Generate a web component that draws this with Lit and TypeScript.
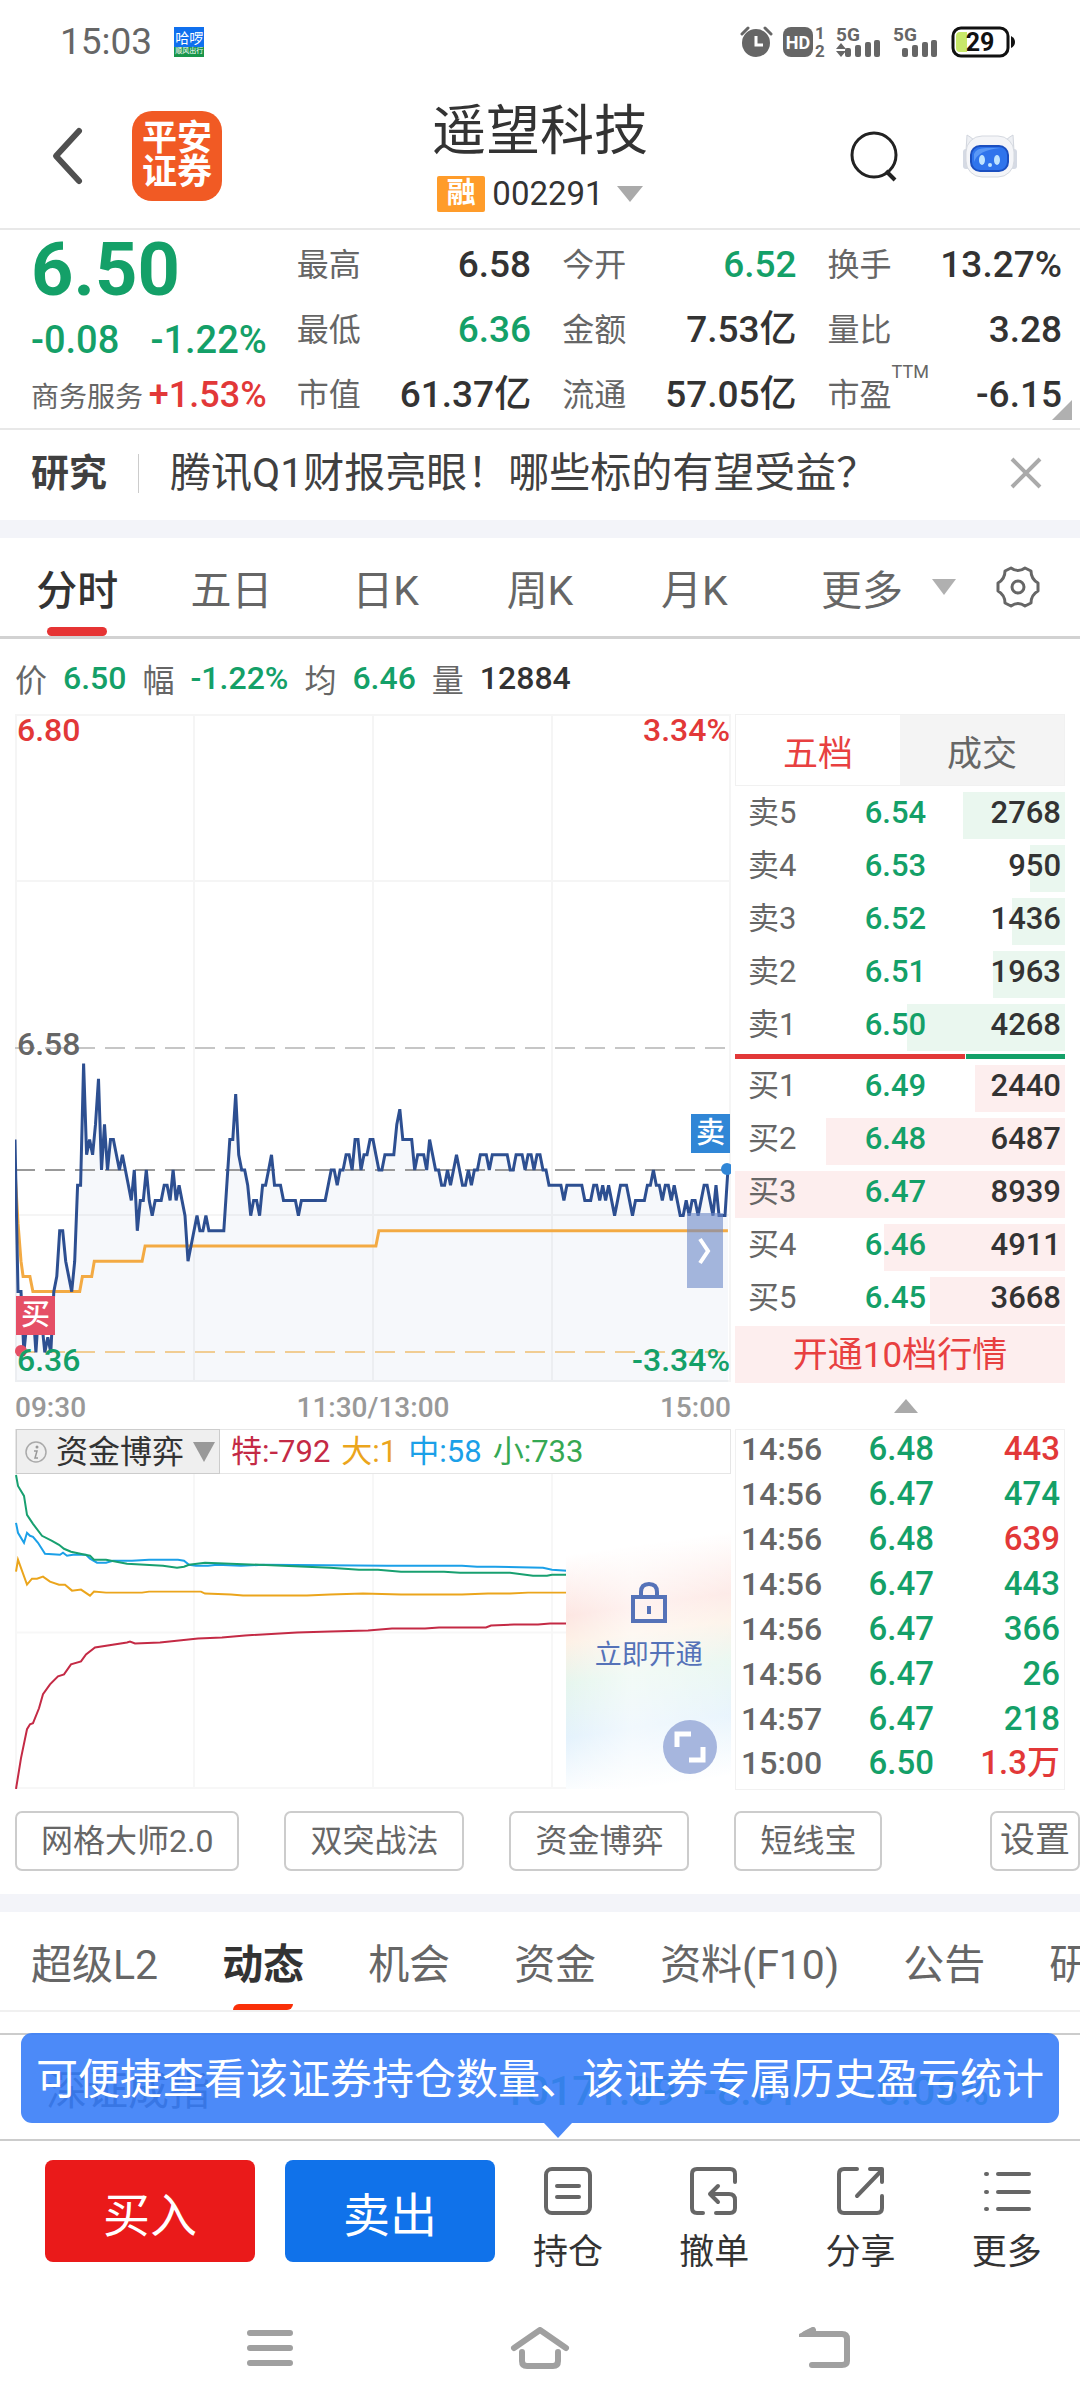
import { LitElement, html, css, svg, nothing } from "lit";
import { customElement, state } from "lit/decorators.js";
import { classMap } from "lit/directives/class-map.js";

type Point = [number, number];

/* Minute prices, in cents above 6.00 yuan, one value per trading minute. */
const MINUTE_PRICES = [
  52, 42, 42, 38, 40, 41, 41, 38, 41, 40, 38, 39, 38, 42, 43, 46, 46, 44, 43, 42,
  44, 49, 49, 57, 51, 52, 51, 53, 56, 50, 53, 50, 52, 52, 51, 50, 51, 50, 49, 48,
  50, 46, 48, 48, 50, 48, 47, 48, 48, 48, 49, 49, 48, 50, 48, 49, 48, 47, 44, 45,
  46, 47, 46, 46, 47, 46, 46, 46, 46, 46, 46, 49, 52, 52, 55, 51, 50, 50, 49, 47,
  48, 48, 47, 49, 49, 50, 51, 49, 49, 49, 48, 48, 48, 48, 48, 47, 48, 48, 48, 48,
  48, 48, 48, 48, 48, 49, 50, 50, 49, 50, 50, 51, 51, 50, 52, 52, 50, 51, 51, 52,
  52, 51, 50, 50, 51, 51, 51, 51, 53, 54, 52, 52, 52, 52, 50, 51, 51, 51, 50, 52,
  51, 50, 50, 49, 49, 50, 49, 50, 51, 50, 49, 49, 50, 49, 50, 50, 51, 51, 51, 50,
  51, 51, 51, 51, 51, 51, 50, 50, 51, 51, 51, 50, 51, 51, 50, 51, 51, 50, 50, 49,
  49, 49, 49, 49, 48, 49, 49, 49, 49, 49, 49, 48, 48, 48, 49, 49, 48, 49, 48, 49,
  48, 47, 48, 49, 49, 49, 48, 47, 48, 48, 48, 48, 49, 49, 50, 49, 49, 48, 49, 49,
  48, 49, 48, 47, 47, 48, 47, 48, 48, 47, 48, 49, 49, 48, 47, 49, 47, 47, 47, 50,
];

/* Average price line: minute, cents above 6.00 yuan. */
const AVERAGE: Point[] = [
  [0, 50], [1, 46.5], [2, 44], [2.7, 43], [5, 43], [6, 42], [21.7, 42], [22.6, 43],
  [25.7, 43], [26.6, 44], [42.6, 44], [43.6, 45], [121, 45], [122, 46], [239, 46],
];

/* Order-size flow curves, in the 716 x 316 box of the lower chart. */
const FLOWS: { color: string; points: Point[] }[] = [
  {
    color: "#1ba0e8",
    points: [[1, 49], [3, 59], [9, 69], [12, 59], [15, 62], [18, 63], [23, 69], [30, 80], [45, 81], [48, 79], [52, 82], [58, 81], [71, 81], [75, 85], [82, 89], [91, 89], [98, 87], [117, 87], [134, 86], [163, 86], [169, 87], [174, 91], [181, 92], [193, 92], [202, 91], [226, 92], [249, 91], [372, 92], [386, 92], [447, 92], [462, 93], [480, 93], [528, 94], [537, 96], [552, 97]],
  },
  {
    color: "#18a070",
    points: [[1, 1], [3, 12], [9, 22], [12, 41], [18, 50], [27, 62], [37, 67], [44, 71], [49, 75], [56, 78], [70, 81], [75, 82], [79, 86], [91, 86], [112, 90], [148, 92], [162, 94], [169, 93], [174, 91], [190, 89], [268, 92], [315, 94], [344, 96], [363, 96], [386, 98], [429, 98], [445, 99], [495, 99], [518, 102], [532, 102], [537, 101], [552, 101]],
  },
  {
    color: "#eba51c",
    points: [[1, 98], [3, 86], [12, 111], [17, 105], [22, 105], [28, 103], [35, 108], [44, 111], [50, 111], [57, 117], [66, 116], [75, 122], [79, 118], [91, 119], [127, 119], [134, 118], [186, 118], [190, 120], [216, 121], [228, 122], [292, 122], [315, 121], [348, 120], [386, 121], [447, 121], [473, 120], [495, 120], [513, 119], [552, 119]],
  },
  {
    color: "#c42a45",
    points: [[1, 316], [6, 285], [12, 256], [15, 251], [18, 250], [24, 235], [28, 221], [35, 211], [43, 203], [49, 201], [56, 191], [66, 188], [71, 181], [80, 174], [112, 169], [115, 168], [120, 170], [145, 169], [183, 165], [207, 164], [230, 162], [282, 159], [315, 158], [353, 157], [377, 155], [410, 155], [424, 154], [471, 154], [476, 152], [499, 151], [523, 151], [535, 150], [552, 150]],
  },
];

const asPoints = (points: Point[]) => points.map(([x, y]) => `${x},${y}`).join(" ");
const priceAt = (minute: number, cents: number): Point => [
  Math.round(minute * 29.83) / 10,
  Math.round((456 - (cents - 50) * 15.2) * 10) / 10,
];

const QUOTE = [
  ["最高", "6.58", ""], ["今开", "6.52", "down"], ["换手", "13.27%", ""],
  ["最低", "6.36", "down"], ["金额", "7.53亿", ""], ["量比", "3.28", ""],
  ["市值", "61.37亿", ""], ["流通", "57.05亿", ""], ["市盈", "-6.15", "", "TTM"],
];

const SELLS: [string, string, number][] = [
  ["卖5", "6.54", 2768], ["卖4", "6.53", 950], ["卖3", "6.52", 1436], ["卖2", "6.51", 1963], ["卖1", "6.50", 4268],
];
const BUYS: [string, string, number][] = [
  ["买1", "6.49", 2440], ["买2", "6.48", 6487], ["买3", "6.47", 8939], ["买4", "6.46", 4911], ["买5", "6.45", 3668],
];
const TICKS = [
  ["14:56", "6.48", "443", "up"], ["14:56", "6.47", "474", "down"], ["14:56", "6.48", "639", "up"],
  ["14:56", "6.47", "443", "down"], ["14:56", "6.47", "366", "down"], ["14:56", "6.47", "26", "down"],
  ["14:57", "6.47", "218", "down"], ["15:00", "6.50", "1.3万", "up"],
];

const shared = css`
  :host {
    display: block;
    font-family: Roboto, "Noto Sans CJK SC", sans-serif;
    color: #333;
  }
  * {
    box-sizing: border-box;
  }
  button {
    margin: 0;
    padding: 0;
    border: 0;
    background: none;
    font: inherit;
    color: inherit;
    white-space: nowrap;
  }
  svg {
    display: block;
    flex: none;
  }
  .up {
    color: #e23838;
  }
  .down {
    color: #14a068;
  }
`;

@customElement("phone-status")
class PhoneStatus extends LitElement {
  static styles = [
    shared,
    css`
      .bar {
        display: flex;
        align-items: center;
        height: 84px;
        padding: 0 64px 0 60px;
        color: #666;
      }
      .time {
        font-size: 37px;
        line-height: 40px;
      }
      .app {
        display: grid;
        grid-template-rows: 20px 10px;
        width: 30px;
        height: 30px;
        margin-left: 22px;
        background: linear-gradient(#1070ee 0 66%, #18954a 66%);
        color: #fff;
        text-align: center;
        font-size: 14px;
        line-height: 22px;
      }
      .app small {
        font-size: 7px;
        line-height: 9px;
      }
      .icons {
        display: flex;
        gap: 10px;
        margin-left: auto;
      }
      .icons svg {
        overflow: visible;
      }
    `,
  ];
  render() {
    const bars = svg`<g fill="#666"><rect x="9" y="23" width="6" height="9" rx="2"/><rect x="19" y="20" width="6" height="12" rx="2"/><rect x="29" y="17" width="6" height="15" rx="2"/><rect x="38" y="15" width="6" height="17" rx="2"/></g>`;
    return html`<div class="bar">
      <span class="time">15:03</span>
      <span class="app"><span>哈啰</span><small>顺风出行</small></span>
      <div class="icons">
        <svg width="33" height="34" viewBox="0 0 33 34"><circle cx="16" cy="18" r="14" fill="#666" /><path d="M2 9L8 3M31 9L25 3" stroke="#666" stroke-width="3" stroke-linecap="round" /><path d="M16 11v9h7" fill="none" stroke="#fff" stroke-width="3" /></svg>
        <svg width="43" height="34" viewBox="0 0 43 34"><rect y="2" width="30" height="30" rx="8" fill="#666" /><text x="15" y="24" font-size="18" font-weight="700" fill="#fff" text-anchor="middle">HD</text><text x="37" y="14" font-size="17" font-weight="700" fill="#666" text-anchor="middle">1</text><text x="37" y="32" font-size="17" font-weight="700" fill="#666" text-anchor="middle">2</text></svg>
        <svg width="47" height="34" viewBox="0 0 47 34"><text y="16" font-size="19" font-weight="700" fill="#666">5G</text><path d="M0 24l5-6 5 6zM0 26l5 6 5-6z" fill="#666" />${bars}</svg>
        <svg width="48" height="34" viewBox="0 0 48 34"><text y="16" font-size="19" font-weight="700" fill="#666">5G</text>${bars}</svg>
        <svg width="65" height="34" viewBox="0 0 65 34"><rect x="2" y="3" width="55" height="28" rx="8" fill="#fff" stroke="#111" stroke-width="3" /><path d="M6 7h10v20H9q-4 0-4-4V11q0-4 4-4z" fill="#c8e86a" /><path d="M60 11q4 2 4 6t-4 6z" fill="#111" /><text x="29" y="26" font-size="25" font-weight="700" fill="#111" text-anchor="middle">29</text></svg>
      </div>
    </div>`;
  }
}

@customElement("stock-header")
class StockHeader extends LitElement {
  static styles = [
    shared,
    css`
      .head {
        display: grid;
        grid-template-columns: 1fr auto 1fr;
        align-items: center;
        height: 146px;
        padding: 0 50px;
        border-bottom: 2px solid #e8e8e8;
      }
      .side {
        display: flex;
        align-items: center;
      }
      .end {
        justify-content: flex-end;
        gap: 62px;
        padding-right: 12px;
      }
      .logo {
        display: grid;
        place-content: center;
        width: 90px;
        height: 90px;
        margin-left: 47px;
        border-radius: 20px;
        background: #f15a24;
        color: #fff;
        font-size: 35px;
        font-weight: 700;
        line-height: 34px;
        text-align: center;
      }
      h1 {
        margin: 0;
        font-size: 54px;
        font-weight: 400;
        line-height: 66px;
      }
      .code {
        display: flex;
        align-items: center;
        justify-content: center;
        gap: 7px;
        width: 100%;
        margin-top: 10px;
        font-size: 33px;
        line-height: 38px;
      }
      .tag {
        width: 48px;
        height: 36px;
        border-radius: 2px;
        background: #ff9c2a;
        color: #fff;
        font-size: 29px;
        font-weight: 700;
        line-height: 34px;
        text-align: center;
      }
      .caret {
        margin-left: 6px;
      }
    `,
  ];
  render() {
    return html`<header class="head">
      <div class="side">
        <button aria-label="返回"><svg width="35" height="60" viewBox="0 0 35 60"><path d="M29 5L6 30l23 25" fill="none" stroke="#505050" stroke-width="6" stroke-linecap="round" stroke-linejoin="round" /></svg></button>
        <div class="logo"><span>平安</span><span>证券</span></div>
      </div>
      <div>
        <h1>遥望科技</h1>
        <button class="code"><span class="tag">融</span><span>002291</span><svg class="caret" width="26" height="18" viewBox="0 0 26 18"><path d="M0 1h26L13 17z" fill="#aaa" /></svg></button>
      </div>
      <div class="side end">
        <button aria-label="搜索"><svg width="52" height="54" viewBox="0 0 52 54"><circle cx="26" cy="26" r="22" fill="none" stroke="#222" stroke-width="3" /><path d="M38 42l9 9" stroke="#222" stroke-width="4" /></svg></button>
        <button aria-label="智能助手"><svg width="56" height="46" viewBox="0 0 56 46"><path d="M5 2q5 2 9 8l-10 8zM51 2q-5 2-9 8l10 8z" fill="#eef0f4" stroke="#d2d6de" stroke-width="1" /><rect x="1" y="16" width="7" height="20" rx="3" fill="#d5dae4" /><rect x="48" y="16" width="7" height="20" rx="3" fill="#d5dae4" /><rect x="4" y="3" width="48" height="41" rx="16" fill="#f4f5f8" stroke="#d5d9e0" stroke-width="1" /><rect x="9" y="13" width="37" height="25" rx="9" fill="#2f74ec" stroke="#1b4fc0" stroke-width="2" /><path d="M12 21q2-6 12-6h14q-22 2-26 14z" fill="#5a98f6" /><ellipse cx="20" cy="27" rx="3" ry="5" fill="#bfe4ff" /><ellipse cx="35" cy="27" rx="3" ry="5" fill="#bfe4ff" /><circle cx="28" cy="32" r="2" fill="#bfe4ff" /></svg></button>
      </div>
    </header>`;
  }
}

@customElement("quote-panel")
class QuotePanel extends LitElement {
  static styles = [
    shared,
    css`
      .quote {
        position: relative;
        display: grid;
        grid-template-columns: 236fr 766fr;
        gap: 30px;
        height: 200px;
        padding: 2px 18px 0 31px;
        border-bottom: 2px solid #e8e8e8;
        font-weight: 500;
      }
      .last {
        font-size: 74px;
        font-weight: 700;
        line-height: 72px;
      }
      .main {
        display: flex;
        flex-direction: column;
        padding-top: 2px;
      }
      .row {
        display: flex;
        align-items: center;
        justify-content: space-between;
      }
      .change {
        height: 68px;
        font-size: 38px;
      }
      .industry {
        height: 42px;
        font-size: 36px;
      }
      .industry span:first-child {
        color: #666;
        font-size: 28px;
        font-weight: 400;
      }
      dl {
        display: grid;
        grid-template-columns: repeat(3, 1fr);
        grid-auto-rows: 65px;
        column-gap: 31px;
        margin: 0;
      }
      .cell {
        display: flex;
        align-items: center;
        line-height: 40px;
      }
      dt {
        color: #666;
        font-size: 32px;
        font-weight: 400;
      }
      dd {
        margin: 0 0 0 auto;
        font-size: 37px;
      }
      sup {
        align-self: flex-start;
        color: #666;
        font-size: 18px;
        line-height: 20px;
        font-weight: 400;
      }
      .corner {
        position: absolute;
        right: 8px;
        bottom: 8px;
      }
    `,
  ];
  render() {
    return html`<section class="quote">
      <div class="main">
        <div class="last down">6.50</div>
        <div class="row change down"><span>-0.08</span><span>-1.22%</span></div>
        <div class="row industry"><span>商务服务</span><span class="up">+1.53%</span></div>
      </div>
      <dl>
        ${QUOTE.map(
          ([label, value, tone, note]) => html`<div class="cell">
            <dt>${label}</dt>
            ${note ? html`<sup>${note}</sup>` : nothing}
            <dd class=${classMap({ down: tone === "down" })}>${value}</dd>
          </div>`
        )}
      </dl>
      <svg class="corner" width="20" height="20" viewBox="0 0 20 20"><path d="M20 0v20H0z" fill="#b0b0b0" /></svg>
    </section>`;
  }
}

@customElement("order-book")
class OrderBook extends LitElement {
  static styles = [
    shared,
    css`
      .tabs {
        display: grid;
        grid-template-columns: 1fr 1fr;
        height: 72px;
        border: 1px solid #f1f1f1;
        font-size: 35px;
      }
      .tabs button {
        background: #f4f4f4;
        color: #666;
      }
      .tabs .active {
        background: #fff;
        color: #e84040;
      }
      .rows {
        display: grid;
        gap: 6px;
        padding-top: 6px;
      }
      .level {
        position: relative;
        display: grid;
        grid-template-columns: 86fr 122fr 104fr;
        align-items: center;
        height: 47px;
        padding: 0 4px 6px 13px;
        font-size: 31px;
        font-weight: 500;
        line-height: 40px;
      }
      .level > span {
        position: relative;
      }
      .name {
        color: #666;
        font-weight: 400;
      }
      .price {
        text-align: center;
      }
      .amount {
        text-align: right;
      }
      .level .fill {
        position: absolute;
        top: 0;
        right: 0;
        height: 100%;
        background: #eaf7ef;
      }
      .buy .fill {
        background: #fdeeee;
      }
      .ratio {
        display: flex;
        height: 5px;
        margin-top: 3px;
        background: #14a068;
      }
      .ratio span {
        border-right: 1px solid #fff;
        background: #e23838;
      }
      .open {
        width: 100%;
        height: 57px;
        margin-top: 2px;
        background: #fdeeee;
        color: #e84040;
        font-size: 35px;
        line-height: 60px;
      }
    `,
  ];
  private level([name, price, amount]: [string, string, number], side: string) {
    return html`<div class="level ${side}">
      <span class="fill" style="width:${(amount / 8939) * 100}%"></span>
      <span class="name">${name}</span><span class="price down">${price}</span><span class="amount">${amount}</span>
    </div>`;
  }
  render() {
    const total = (rows: [string, string, number][]) => rows.reduce((sum, row) => sum + row[2], 0);
    const share = (total(BUYS) / (total(BUYS) + total(SELLS))) * 100;
    return html`<div class="tabs"><button class="active">五档</button><button>成交</button></div>
      <div class="rows">${SELLS.map((row) => this.level(row, "sell"))}</div>
      <div class="ratio"><span style="width:${share}%"></span></div>
      <div class="rows">${BUYS.map((row) => this.level(row, "buy"))}</div>
      <button class="open">开通10档行情</button>`;
  }
}

@customElement("price-chart")
class PriceChart extends LitElement {
  static styles = [
    shared,
    css`
      .chart {
        position: relative;
        height: 668px;
        font-size: 32px;
        font-weight: 500;
        line-height: 36px;
      }
      .plot {
        width: 100%;
        height: 668px;
      }
      .label {
        position: absolute;
        left: 2px;
      }
      .right {
        right: 1px;
        left: auto;
      }
      .top {
        top: -2px;
      }
      .mid {
        top: 312px;
        color: #666;
      }
      .bottom {
        bottom: 4px;
      }
      .mark {
        position: absolute;
        width: 39px;
        height: 39px;
        color: #fff;
        font-size: 29px;
        font-weight: 500;
        line-height: 38px;
        text-align: center;
      }
      .bought {
        top: 582px;
        left: 1px;
        background: #e54f66;
      }
      .sold {
        top: 400px;
        right: 1px;
        background: #3086d6;
      }
      .fold {
        position: absolute;
        top: 499px;
        right: 8px;
        display: grid;
        place-items: center;
        width: 36px;
        height: 75px;
        background: rgba(108, 136, 200, 0.6);
      }
      .axis {
        display: flex;
        justify-content: space-between;
        height: 46px;
        color: #999;
        font-size: 28px;
        font-weight: 500;
        line-height: 52px;
      }
    `,
  ];
  render() {
    const price = MINUTE_PRICES.map((cents, minute) => priceAt(minute, cents));
    const average = AVERAGE.map(([minute, cents]) => priceAt(minute, cents));
    return html`<div class="chart">
        <svg class="plot" viewBox="0 0 716 668" preserveAspectRatio="none">
          <polygon points="0,668 ${asPoints(price)} 713,668" fill="#f6f8fb" />
          <path d="M0 1H716M0 167H716M0 501H716M0 667H716M1 0V668M179 0V668M358 0V668M537 0V668M715 0V668" fill="none" stroke="#000" stroke-opacity=".04" stroke-width="2" />
          <path d="M0 334H710" stroke="#c6c6c6" stroke-width="2" stroke-dasharray="20 10" />
          <path d="M0 456H710" stroke="#999" stroke-width="2" stroke-dasharray="20 10" />
          <path d="M0 638H710" stroke="#f1cd93" stroke-width="2" stroke-dasharray="20 10" />
          <polyline points=${asPoints(average)} fill="none" stroke="#f3aa43" stroke-width="3" />
          <polyline points=${asPoints(price)} fill="none" stroke="#2d4f91" stroke-width="3" />
          <circle cx="6" cy="637" r="6" fill="#e54f66" />
          <circle cx="712" cy="455" r="6" fill="#3086d6" />
        </svg>
        <span class="label top up">6.80</span><span class="label top right up">3.34%</span>
        <span class="label mid">6.58</span>
        <span class="label bottom down">6.36</span><span class="label bottom right down">-3.34%</span>
        <span class="mark bought">买</span><span class="mark sold">卖</span>
        <button class="fold" aria-label="收起盘口"><svg width="16" height="28" viewBox="0 0 16 28"><path d="M3 2l8 12-8 12" fill="none" stroke="#fff" stroke-width="4" /></svg></button>
      </div>
      <div class="axis"><span>09:30</span><span>11:30/13:00</span><span>15:00</span></div>`;
  }
}

@customElement("flow-chart")
class FlowChart extends LitElement {
  static styles = [
    shared,
    css`
      .head {
        display: flex;
        align-items: center;
        gap: 11px;
        height: 45px;
        border: 1px solid #e6e6e6;
        font-size: 31px;
        line-height: 40px;
        white-space: nowrap;
      }
      .pick {
        display: flex;
        align-items: center;
        gap: 9px;
        height: 45px;
        padding: 0 4px 0 8px;
        border: 1px solid #ccc;
        background: #efefef;
        font-size: 32px;
      }
      .super { color: #c42a45; }
      .big { color: #eba51c; }
      .middle { color: #1ba0e8; }
      .small { color: #35a853; }
      .chart {
        position: relative;
        height: 315px;
      }
      .plot {
        width: 100%;
        height: 315px;
      }
      .veil {
        position: absolute;
        top: 0;
        right: 0;
        bottom: 0;
        display: flex;
        flex-direction: column;
        align-items: center;
        width: 23%;
        padding-top: 108px;
        background:
          linear-gradient(90deg, rgba(255, 255, 255, 0), rgba(255, 255, 255, 0.5) 40%, rgba(255, 255, 255, 0.2)),
          linear-gradient(172deg, #fff 24%, #fde6e2 42%, #fdf1e6 50%, #e6f6ee 62%, #e4f2fc 78%, #fff 96%);
        color: #5572b8;
        font-size: 27px;
        line-height: 36px;
      }
      .veil svg {
        margin-bottom: 13px;
      }
      .full {
        position: absolute;
        right: 14px;
        bottom: 15px;
        display: grid;
        place-items: center;
        width: 54px;
        height: 54px;
        border-radius: 50%;
        background: #a6b6de;
      }
    `,
  ];
  render() {
    return html`<div class="head">
        <button class="pick">
          <svg width="22" height="22" viewBox="0 0 22 22"><circle cx="11" cy="11" r="10" fill="none" stroke="#aaa" stroke-width="1.500" /><circle cx="12" cy="6" r="1.500" fill="#999" /><path d="M9 10h3l-2 7h3" fill="none" stroke="#999" stroke-width="1.500" /></svg>
          <span>资金博弈</span>
          <svg width="22" height="20" viewBox="0 0 22 20"><path d="M0 0h22L11 20z" fill="#999" /></svg>
        </button>
        <span class="super">特:-792</span><span class="big">大:1</span><span class="middle">中:58</span><span class="small">小:733</span>
      </div>
      <div class="chart">
        <svg class="plot" viewBox="0 0 716 316" preserveAspectRatio="none">
          <path d="M1 0V316M179 0V316M358 0V316M537 0V316M715 0V316M0 159H716M0 315H716" fill="none" stroke="#f7f7f7" stroke-width="2" />
          ${FLOWS.map((flow) => svg`<polyline points=${asPoints(flow.points)} fill="none" stroke=${flow.color} stroke-width="2"/>`)}
        </svg>
        <button class="veil">
          <svg width="36" height="42" viewBox="0 0 36 42"><path d="M2 15h32v24H2zM10 15V10q0-8 8-8t8 8v5M18 24v8" fill="none" stroke="#5572b8" stroke-width="4" /></svg>
          立即开通
        </button>
        <button class="full" aria-label="全屏"><svg width="32" height="32" viewBox="0 0 32 32"><path d="M3 16V3h14M29 16v13H15" fill="none" stroke="#fff" stroke-width="5" /></svg></button>
      </div>`;
  }
}

@customElement("tick-list")
class TickList extends LitElement {
  static styles = [
    shared,
    css`
      table {
        width: 100%;
        height: 360px;
        border: 1px solid #f1f1f1;
        border-collapse: collapse;
        font-size: 33px;
        line-height: 36px;
      }
      td {
        height: 45px;
        padding: 0 4px 7px 5px;
        font-weight: 500;
      }
      td:first-child {
        width: 128px;
        color: #666;
        font-size: 32px;
      }
      td:last-child {
        text-align: right;
      }
    `,
  ];
  render() {
    return html`<table aria-label="逐笔成交">
      <tbody>
        ${TICKS.map(([time, price, amount, tone]) => html`<tr><td>${time}</td><td class="down">${price}</td><td class=${tone}>${amount}</td></tr>`)}
      </tbody>
    </table>`;
  }
}

@customElement("trade-bar")
class TradeBar extends LitElement {
  static styles = [
    shared,
    css`
      .trade {
        display: grid;
        grid-template-columns: 450fr 585fr;
        height: 148px;
        padding: 19px 0 0 45px;
        border-top: 2px solid #ccc;
      }
      .orders {
        display: grid;
        grid-template-columns: 1fr 1fr;
        gap: 30px;
      }
      .order {
        height: 102px;
        border-radius: 8px;
        color: #fff;
        font-size: 47px;
      }
      .buy { background: #ea1a1a; }
      .sell { background: #1072ea; }
      .actions {
        display: grid;
        grid-template-columns: repeat(4, 1fr);
      }
      .actions button {
        display: flex;
        flex-direction: column;
        align-items: center;
        gap: 12px;
        padding-top: 6px;
        font-size: 35px;
        line-height: 50px;
      }
      .nav {
        display: grid;
        grid-template-columns: repeat(3, 1fr);
        height: 120px;
        padding: 40px 135px 0;
      }
      .nav button {
        display: flex;
        justify-content: center;
      }
      .nav .back {
        padding-left: 30px;
      }
    `,
  ];
  render() {
    const icon = (paths: unknown) => html`<svg width="52" height="50" viewBox="0 0 52 50" fill="none" stroke="#666" stroke-width="4" stroke-linecap="round" stroke-linejoin="round">${paths}</svg>`;
    const actions: [string, unknown][] = [
      ["持仓", svg`<rect x="4" y="3" width="44" height="44" rx="6"/><path d="M15 20h22M15 31h22"/>`],
      ["撤单", svg`<path d="M47 16V8q0-5-5-5H9Q4 3 4 8v34q0 5 5 5h6M28 47h14q5 0 5-5V34q0-6-6-6H22M30 20l-8 8 8 8"/>`],
      ["分享", svg`<path d="M22 3H9Q4 3 4 8v34q0 5 5 5h33q5 0 5-5V30M22 30L47 4M35 3h12v13"/>`],
      ["更多", svg`<path d="M5 8h1M5 26h1M5 43h1M17 8h31M17 26h31M17 43h31"/>`],
    ];
    return html`<div class="trade">
        <div class="orders"><button class="order buy">买入</button><button class="order sell">卖出</button></div>
        <div class="actions">${actions.map(([label, paths]) => html`<button>${icon(paths)}${label}</button>`)}</div>
      </div>
      <nav class="nav">
        <button aria-label="任务"><svg width="60" height="46" viewBox="0 0 60 46"><path d="M10 6h40M10 21h40M10 36h40" stroke="#a0a0a0" stroke-width="6" stroke-linecap="round" /></svg></button>
        <button aria-label="主屏幕"><svg width="60" height="46" viewBox="0 0 60 46"><path d="M4 21L30 3l26 18M12 25v9q0 5 5 5h26q5 0 5-5v-9" fill="none" stroke="#a0a0a0" stroke-width="6" stroke-linecap="round" stroke-linejoin="round" /></svg></button>
        <button class="back" aria-label="后退"><svg width="60" height="46" viewBox="0 0 60 46"><path d="M18 3L10 7h37q5 0 5 5v22q0 4-5 4H17" fill="none" stroke="#a0a0a0" stroke-width="6" stroke-linecap="round" stroke-linejoin="round" /><path d="M4 10V7L18 0v10z" fill="#a0a0a0" /></svg></button>
      </nav>`;
  }
}

@customElement("app-root")
class AppRoot extends LitElement {
  @state() private period = "分时";
  @state() private section = "动态";

  static styles = [
    shared,
    css`
      :host {
        min-height: 100vh;
        overflow: hidden;
        background: #fff;
      }
      .news {
        display: flex;
        align-items: center;
        height: 90px;
        padding: 0 38px 4px 31px;
        color: #404040;
        font-size: 41px;
        line-height: 60px;
        white-space: nowrap;
      }
      .news strong {
        font-size: 38px;
        font-weight: 700;
      }
      .rule {
        width: 1px;
        height: 39px;
        margin: 0 31px;
        background: #ccc;
      }
      .news .close {
        margin-left: auto;
      }
      .band {
        height: 18px;
        background: #f3f4f9;
      }
      .periods {
        display: grid;
        grid-template-columns: repeat(5, 154fr) 308fr;
        height: 101px;
        border-bottom: 3px solid #d2d2d2;
        color: #666;
        font-size: 41px;
      }
      .periods button {
        position: relative;
      }
      .periods .active {
        color: #333;
        font-weight: 500;
      }
      .active::after {
        content: "";
        position: absolute;
        bottom: 0;
        left: 50%;
        width: 60px;
        height: 9px;
        margin-left: -30px;
        border-radius: 5px;
        background: #e63434;
      }
      .extra {
        display: flex;
        align-items: center;
        justify-content: flex-end;
        gap: 28px;
        padding-right: 40px;
      }
      .extra .more {
        display: flex;
        align-items: center;
        gap: 29px;
      }
      .extra .gear {
        margin-left: 12px;
      }
      .summary {
        display: flex;
        align-items: center;
        gap: 16px;
        height: 75px;
        padding: 2px 15px 0;
        color: #666;
        font-size: 32px;
      }
      .summary b {
        font-weight: 500;
      }
      .summary .dark {
        color: #333;
      }
      .board {
        display: grid;
        grid-template-columns: 716fr 330fr;
        column-gap: 4px;
        padding: 0 15px;
      }
      .collapse {
        display: flex;
        justify-content: center;
        width: 100%;
        height: 46px;
        padding: 16px 0 0 12px;
      }
      .chips {
        display: flex;
        gap: 45px;
        padding: 21px 0 23px 15px;
        color: #666;
        font-size: 32px;
      }
      .chips button {
        height: 60px;
        padding: 0 24px;
        border: 2px solid #ccc;
        border-radius: 7px;
        line-height: 54px;
      }
      .chips .settings {
        margin-left: auto;
        padding: 0 8px;
        font-size: 35px;
      }
      .sections {
        display: flex;
        gap: 64px;
        height: 100px;
        padding-left: 31px;
        border-bottom: 2px solid #f0f0f0;
        color: #666;
        font-size: 41px;
      }
      .sections button {
        position: relative;
      }
      .sections .active {
        color: #333;
        font-weight: 700;
      }
      .sections .active::after {
        height: 6px;
        border-radius: 6px 0 6px 0;
        background: #fa3008;
      }
      .index {
        position: relative;
        height: 106px;
        margin-top: 21px;
        border-top: 2px solid #ccc;
      }
      .figures {
        display: grid;
        grid-template-columns: 455fr 200fr 160fr 170fr;
        padding: 26px 46px 0;
        font-size: 41px;
        line-height: 60px;
      }
      .figures b {
        font-weight: 500;
        white-space: nowrap;
      }
      .tip {
        position: absolute;
        inset: -2px 21px 16px;
        border-radius: 11px;
        background: rgba(56, 125, 247, 0.9);
        color: #fff;
        font-size: 42px;
        line-height: 93px;
        text-align: center;
        white-space: nowrap;
      }
      .tip svg {
        position: absolute;
        top: 100%;
        left: 50%;
        margin-left: 4px;
      }
    `,
  ];

  private tab(name: string, current: string, pick: (name: string) => void) {
    return html`<button class=${classMap({ active: name === current })} @click=${() => pick(name)}>${name}</button>`;
  }

  render() {
    return html`
      <phone-status></phone-status>
      <stock-header></stock-header>
      <quote-panel></quote-panel>
      <div class="news">
        <strong>研究</strong><span class="rule"></span><span>腾讯Q1财报亮眼！哪些标的有望受益？</span>
        <button class="close" aria-label="关闭"><svg width="32" height="32" viewBox="0 0 32 32"><path d="M2 2l28 28M30 2L2 30" stroke="#aaa" stroke-width="4" /></svg></button>
      </div>
      <div class="band"></div>
      <nav class="periods">
        ${["分时", "五日", "日K", "周K", "月K"].map((name) => this.tab(name, this.period, (n) => (this.period = n)))}
        <div class="extra">
          <button class="more">更多<svg width="24" height="16" viewBox="0 0 24 16"><path d="M0 0h24L12 16z" fill="#b0b0b0" /></svg></button>
          <button class="gear" aria-label="图表设置"><svg width="44" height="44" viewBox="0 0 44 44" fill="none" stroke="#666" stroke-width="3" stroke-linejoin="round"><path d="M15 3q7 5 14 0l6 3q0 8 7 12v8q-7 4-7 12l-6 3q-7-5-14 0l-6-3q0-8-7-12v-8q7-4 7-12z" /><circle cx="22" cy="22" r="6" /></svg></button>
        </div>
      </nav>
      <div class="summary">
        <span>价</span><b class="down">6.50</b><span>幅</span><b class="down">-1.22%</b><span>均</span><b class="down">6.46</b><span>量</span><b class="dark">12884</b>
      </div>
      <main class="board">
        <price-chart></price-chart>
        <div>
          <order-book></order-book>
          <button class="collapse" aria-label="收起"><svg width="24" height="14" viewBox="0 0 24 14"><path d="M12 0l12 14H0z" fill="#aaa" /></svg></button>
        </div>
        <flow-chart></flow-chart>
        <tick-list></tick-list>
      </main>
      <div class="chips">
        <button>网格大师2.0</button><button>双突战法</button><button>资金博弈</button><button>短线宝</button>
        <button class="settings">设置</button>
      </div>
      <div class="band"></div>
      <nav class="sections">
        ${["超级L2", "动态", "机会", "资金", "资料(F10)", "公告", "研报"].map((name) => this.tab(name, this.section, (n) => (this.section = n)))}
      </nav>
      <section class="index">
        <div class="figures"><span>深证成指</span><b class="down">10171.09</b><b class="down">-8.01</b><b class="down">-0.08%</b></div>
        <div class="tip" role="tooltip">可便捷查看该证券持仓数量、该证券专属历史盈亏统计<svg width="28" height="15" viewBox="0 0 28 15"><path d="M0 0h28L14 15z" fill="#4c8af8" /></svg></div>
      </section>
      <trade-bar></trade-bar>
    `;
  }
}
